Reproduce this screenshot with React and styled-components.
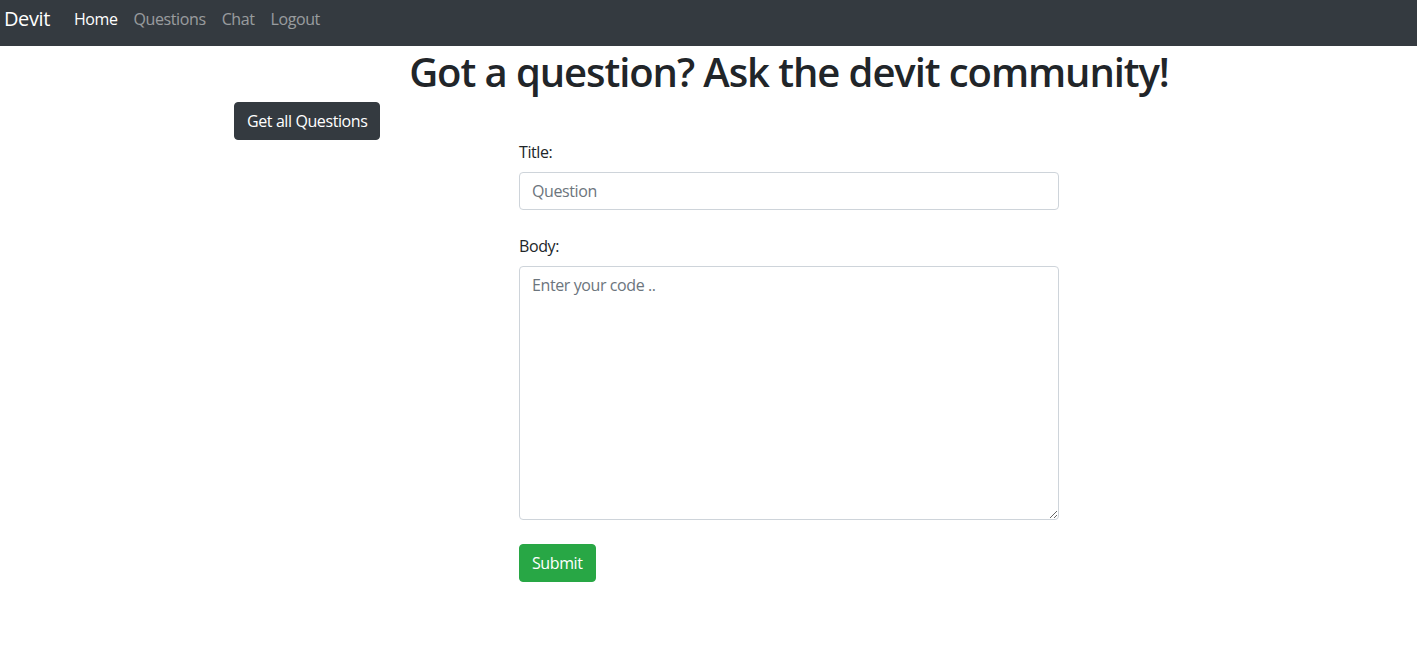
import React from "react";
import styled, { createGlobalStyle } from "styled-components";

const GlobalStyle = createGlobalStyle`
  * {
    box-sizing: border-box;
  }
  body {
    margin: 0;
    font-family: "Open Sans", "Noto Sans", sans-serif;
    font-size: 16px;
    line-height: 1.5;
    letter-spacing: -0.025em;
    color: #212529;
    background: #fff;
  }
`;

const Navbar = styled.nav`
  height: 46px;
  background-color: #343a40;
  display: flex;
  align-items: center;
  padding: 0 4px 8px 4px;
`;

const Brand = styled.a`
  font-size: 20px;
  line-height: 30px;
  color: #fff;
  margin-right: 16px;
  text-decoration: none;
`;

const NavList = styled.div`
  display: flex;
  align-items: center;
`;

const NavLink = styled.a`
  padding: 0 8px;
  line-height: 24px;
  text-decoration: none;
  color: ${(p) => (p.$active ? "#fff" : "rgba(255, 255, 255, 0.5)")};
`;

const Container = styled.main`
  width: 1110px;
  margin-left: 234px;
  display: flex;
  flex-direction: column;
`;

const Heading = styled.h1`
  margin: 0 0 8px;
  padding-top: 2px;
  height: 48px;
  font-size: 40px;
  font-weight: 600;
  line-height: 48px;
  letter-spacing: -0.027em;
  text-align: center;
`;

const Button = styled.button`
  font-family: inherit;
  font-size: 16px;
  line-height: 24px;
  letter-spacing: inherit;
  padding: 6px 12px;
  border: 1px solid ${(p) => p.$color};
  border-radius: 4px;
  background-color: ${(p) => p.$color};
  color: #fff;
  cursor: pointer;
  align-self: flex-start;
`;

const Form = styled.form`
  width: 540px;
  align-self: center;
  display: flex;
  flex-direction: column;
`;

const Group = styled.div`
  display: flex;
  flex-direction: column;
  margin-bottom: 24px;
`;

const Label = styled.label`
  line-height: 24px;
  margin-bottom: 8px;
`;

const fieldStyles = `
  font-family: inherit;
  font-size: 16px;
  line-height: 24px;
  letter-spacing: inherit;
  color: #495057;
  padding: 6px 12px;
  border: 1px solid #ced4da;
  border-radius: 4px;
  width: 100%;
  &::placeholder {
    color: #6c757d;
  }
`;

const Input = styled.input`
  ${fieldStyles}
  height: 38px;
`;

const TextArea = styled.textarea`
  ${fieldStyles}
  height: 254px;
  resize: vertical;
`;

export default function App() {
  return (
    <>
      <GlobalStyle />
      <Navbar>
        <Brand href="#">Devit</Brand>
        <NavList>
          <NavLink href="#" $active>
            Home
          </NavLink>
          <NavLink href="#">Questions</NavLink>
          <NavLink href="#">Chat</NavLink>
          <NavLink href="#">Logout</NavLink>
        </NavList>
      </Navbar>
      <Container>
        <Heading>Got a question? Ask the devit community!</Heading>
        <Button type="button" $color="#343a40">
          Get all Questions
        </Button>
        <Form onSubmit={(e) => e.preventDefault()}>
          <Group>
            <Label htmlFor="title">Title:</Label>
            <Input id="title" placeholder="Question" />
          </Group>
          <Group>
            <Label htmlFor="body">Body:</Label>
            <TextArea id="body" placeholder="Enter your code .." />
          </Group>
          <Button type="submit" $color="#28a745">
            Submit
          </Button>
        </Form>
      </Container>
    </>
  );
}
